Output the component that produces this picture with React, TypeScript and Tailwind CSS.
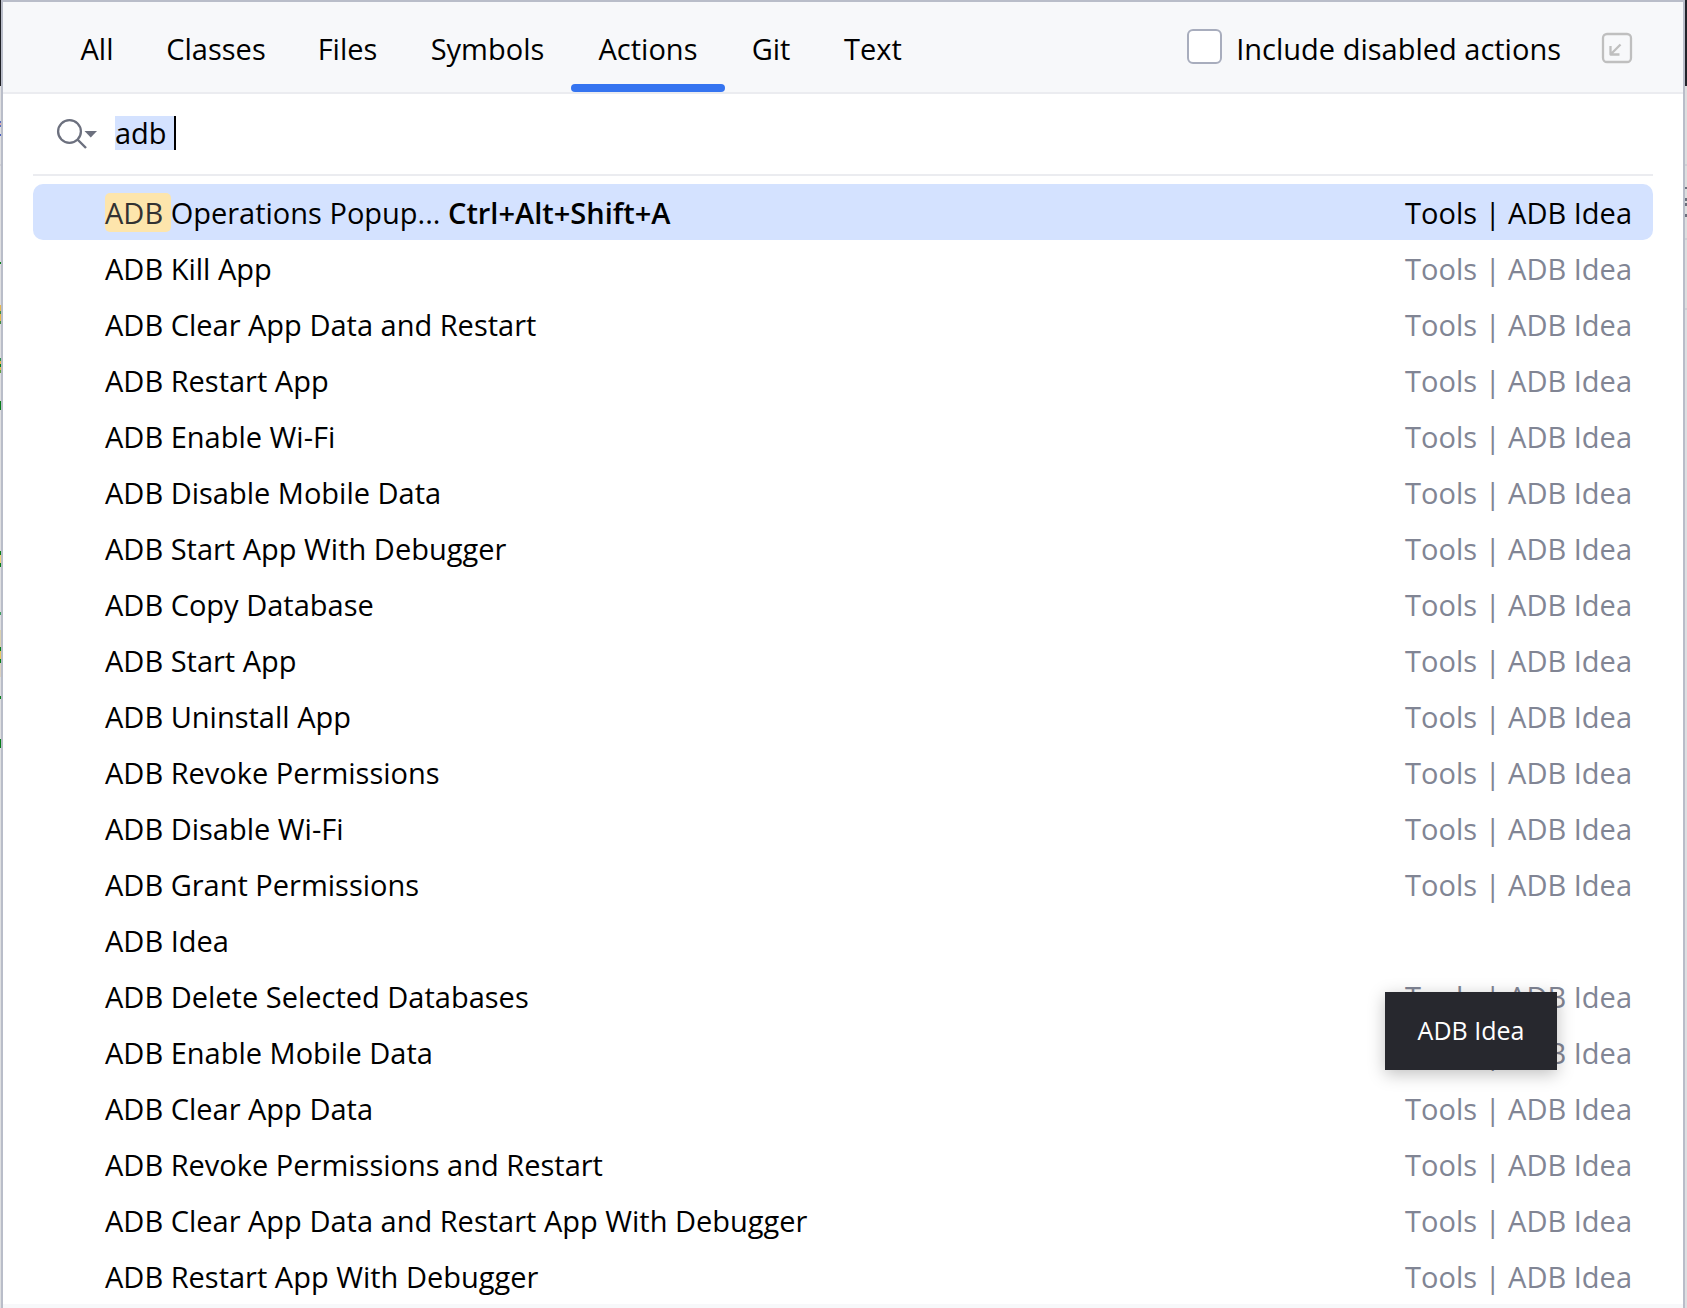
import React, { useState } from "react";

const tabs = [
  { label: "All", width: "w-[88px]" },
  { label: "Classes", width: "w-[150px]" },
  { label: "Files", width: "w-[113px]" },
  { label: "Symbols", width: "w-[167px]" },
  { label: "Actions", width: "w-[154px]" },
  { label: "Git", width: "w-[92px]" },
  { label: "Text", width: "w-[112px]" },
];

const actions = [
  { name: "Operations Popup...", shortcut: "Ctrl+Alt+Shift+A", group: "Tools | ADB Idea" },
  { name: "Kill App", group: "Tools | ADB Idea" },
  { name: "Clear App Data and Restart", group: "Tools | ADB Idea" },
  { name: "Restart App", group: "Tools | ADB Idea" },
  { name: "Enable Wi-Fi", group: "Tools | ADB Idea" },
  { name: "Disable Mobile Data", group: "Tools | ADB Idea" },
  { name: "Start App With Debugger", group: "Tools | ADB Idea" },
  { name: "Copy Database", group: "Tools | ADB Idea" },
  { name: "Start App", group: "Tools | ADB Idea" },
  { name: "Uninstall App", group: "Tools | ADB Idea" },
  { name: "Revoke Permissions", group: "Tools | ADB Idea" },
  { name: "Disable Wi-Fi", group: "Tools | ADB Idea" },
  { name: "Grant Permissions", group: "Tools | ADB Idea" },
  { name: "Idea", group: "" },
  { name: "Delete Selected Databases", group: "Tools | ADB Idea" },
  { name: "Enable Mobile Data", group: "Tools | ADB Idea" },
  { name: "Clear App Data", group: "Tools | ADB Idea" },
  { name: "Revoke Permissions and Restart", group: "Tools | ADB Idea" },
  { name: "Clear App Data and Restart App With Debugger", group: "Tools | ADB Idea" },
  { name: "Restart App With Debugger", group: "Tools | ADB Idea" },
];

/* Slivers of the editor that show on both sides of the popup: [height, colour]. */
const leftEdge: [number, string][] = [
  [86, "#1f2025"], [35, "#dfdfe1"], [2, "#5a6fc0"], [2, "#e0a9a9"], [2, "#5a6fc0"], [7, "#dfdfe1"], [2, "#4a5fc0"],
  [28, "#dfdfe1"], [2, "#cfcfd4"], [96, "#dfdfe1"], [2, "#067d17"], [41, "#dfdfe1"], [6, "#e8b950"], [3, "#3d8b3d"],
  [7, "#e8b950"], [3, "#3d8b3d"], [34, "#dfdfe1"], [3, "#2f8f4f"], [3, "#e8b950"], [3, "#067d17"], [3, "#e8b950"],
  [3, "#5d9d3d"], [28, "#dfdfe1"], [9, "#067d17"], [141, "#dfdfe1"], [4, "#067d17"], [8, "#edd27c"], [4, "#067d17"],
  [45, "#dfdfe1"], [3, "#3d9d5d"], [15, "#dfdfe1"], [17, "#dcd2b0"], [4, "#067d17"], [8, "#e8c860"], [4, "#067d17"],
  [14, "#dcd2c0"], [19, "#dfdfe1"], [3, "#067d17"], [40, "#dfdfe1"], [9, "#067d17"],
];
const rightEdge: [number, string][] = [
  [86, "#22232a"], [78, "#dedede"], [2, "#cfcfd4"], [21, "#dedede"], [2, "#6c6f7c"], [9, "#dedede"], [3, "#6c6f7c"],
  [2, "#dedede"], [3, "#6c6f7c"], [8, "#dedede"], [3, "#6c6f7c"], [21, "#dedede"], [2, "#cfcfd4"], [68, "#dedede"],
  [2, "#cfcfd4"],
];

function Edge({ parts, className }: { parts: [number, string][]; className: string }) {
  return (
    <div aria-hidden="true" className={className}>
      {parts.map(([height, background], i) => (
        <div key={i} className="shrink-0" style={{ height, background }} />
      ))}
    </div>
  );
}

function SearchIcon() {
  return (
    <svg width="42" height="34" viewBox="0 0 42 34" fill="none" aria-hidden="true">
      <circle cx="13.5" cy="15.5" r="11.4" stroke="#6c707e" strokeWidth="2.3" />
      <path d="M21.5 23.5L30 32" stroke="#6c707e" strokeWidth="2.4" />
      <path d="M28.5 15H41L34.75 21.5Z" fill="#6c707e" />
    </svg>
  );
}

function OpenInToolWindowIcon() {
  return (
    <svg width="32" height="32" viewBox="0 0 32 32" fill="none" stroke="#bfbfbf" strokeWidth="2.3" aria-hidden="true">
      <rect x="2" y="2" width="28" height="28" rx="4" />
      <path d="M19.5 12.5L9.5 22.5M9.5 14V22.5H18.5" strokeLinejoin="round" />
    </svg>
  );
}

export default function App() {
  const [activeTab, setActiveTab] = useState("Actions");
  const [selected, setSelected] = useState(0);
  const [query, setQuery] = useState("adb ");

  return (
    <div className="flex min-h-screen border-t-2 border-[#b9bdc9] bg-[#dedfe1] font-['Open_Sans',sans-serif] text-[29px] leading-10 text-black">
      <Edge parts={leftEdge} className="-mt-0.5 flex w-px flex-col" />
      <main className="flex min-w-0 flex-1 flex-col border-x-2 border-[#b9bdc9] bg-white">
        <header className="flex h-[92px] items-stretch border-b-2 border-[#ebecf0] bg-[#f7f8fa] pl-[50px] pr-[50px]">
          <div role="tablist" className="flex">
            {tabs.map((tab) => (
              <button
                key={tab.label}
                role="tab"
                aria-selected={tab.label === activeTab}
                onClick={() => setActiveTab(tab.label)}
                className={`flex flex-col items-center justify-between pt-[27px] ${tab.width}`}
              >
                {tab.label}
                <span className={`h-2 w-full rounded-full ${tab.label === activeTab ? "bg-[#3574f0]" : ""}`} />
              </button>
            ))}
          </div>
          <div className="ml-auto flex items-start">
            <label className="flex items-start gap-[14px]">
              <input
                type="checkbox"
                className="mt-[27px] size-[35px] appearance-none rounded-[6px] border-2 border-[#a8adbd] bg-white checked:bg-[#3574f0]"
              />
              <span className="pt-[27px]">Include disabled actions</span>
            </label>
            <button aria-label="Open in tool window" className="ml-10 mt-[30px]">
              <OpenInToolWindowIcon />
            </button>
          </div>
        </header>

        <section className="flex flex-col px-[30px]">
          <div className="flex h-[82px] items-center border-b-2 border-[#ebecf0] pb-0.5 pl-[23px]">
            <button aria-label="Search history">
              <SearchIcon />
            </button>
            <input
              type="text"
              aria-label="Search actions"
              value={query}
              onChange={(e) => setQuery(e.target.value)}
              className="ml-[17px] h-[34px] border-r-2 border-black bg-[#d4e2ff] outline-none [field-sizing:content]"
            />
          </div>

          <div className="relative pt-2">
            <ul role="listbox" aria-label="Actions">
              {actions.map((action, i) => (
                <li
                  key={action.name}
                  role="option"
                  aria-selected={i === selected}
                  onClick={() => setSelected(i)}
                  className={`flex h-14 items-center justify-between rounded-[10px] pl-[72px] pr-[21px] pt-0.5 ${i === selected ? "bg-[#d4e2ff]" : ""}`}
                >
                  <span className="whitespace-pre">
                    <span className={i === 0 ? "rounded-[5px] bg-[#fde5ac] text-[#323232]" : ""}>{"ADB "}</span>
                    {action.name}
                    {action.shortcut && <span className="font-semibold">{" " + action.shortcut}</span>}
                  </span>
                  <span className={i === selected ? "" : "text-[#818594]"}>{action.group}</span>
                </li>
              ))}
            </ul>
            <div
              role="tooltip"
              className="absolute right-24 top-[816px] flex h-[78px] w-[172px] items-center justify-center bg-[#27282e] pb-0.5 text-[25px] text-white shadow-[0_4px_16px_rgba(0,0,0,0.25)]"
            >
              ADB Idea
            </div>
          </div>
        </section>
        <footer className="min-h-1 flex-1 bg-[#f7f8fa]" />
      </main>
      <Edge parts={rightEdge} className="-mt-0.5 flex w-0.5 flex-col" />
    </div>
  );
}
